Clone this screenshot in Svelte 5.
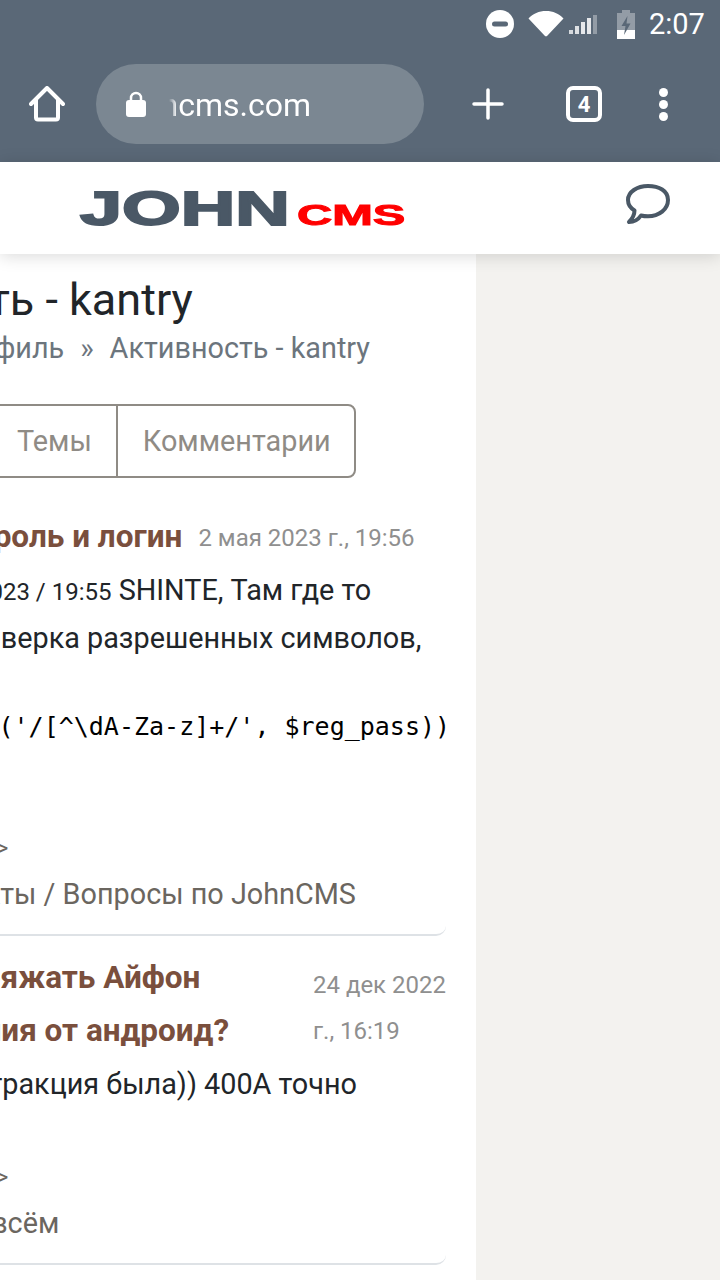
<script>
  const posts = [
    {
      title: ['Менять\u2009 пароль и логин'],
      date: ['2 мая 2023 г., 19:56'],
      body: ['<small>Kantry, 02.05.2023 / 19:55</small> SHINTE, Там где то', 'вот есть проверка разрешенных символов,'],
      code: "preg_match('/[^\\dA-Za-z]+/', $reg_pass))",
      crumb: 'Общий форум >',
      section: 'Наши\u2009 проекты / Вопросы по JohnCMS',
    },
    {
      title: ['Как тут заряжать Айфон', 'тоже отличия от андроид?'],
      wrapped: true,
      date: ['24 дек 2022', 'г., 16:19'],
      body: ['Ага там экстракция была)) 400А точно'],
      crumb: 'Общий форум >',
      section: 'Пишем обо всём',
    },
  ]
</script>

<div class="phone">
  <header class="chrome">
    <div class="status">
      <svg class="dnd" viewBox="0 0 28 28" width="28" height="28">
        <circle cx="14" cy="14" r="14" fill="#fff" />
        <rect x="6" y="11.5" width="16" height="5" rx="2.5" fill="#5a6877" />
      </svg>
      <svg class="wifi" viewBox="0 0 36 27" width="36" height="27">
        <path d="M0.5 8.5C5 3.5 11 1 18 1s13 2.500 17.500 7.500L19.500 25.500a2 2 0 0 1-3 0z" fill="#fff" />
      </svg>
      <svg class="signal" viewBox="0 0 28 20" width="28" height="20">
        <path d="M0 15h4v4H0z" fill="#fff" fill-opacity=".75" />
        <path d="M6 11h4v8H6z" fill="#fff" fill-opacity=".8" />
        <path d="M12 7h4v12h-4z" fill="#fff" fill-opacity=".85" />
        <path d="M18 3h4v16h-4z" fill="#fff" fill-opacity=".85" />
        <path d="M24 0h4v19h-4z" fill="#fff" fill-opacity=".35" />
      </svg>
      <svg class="battery" viewBox="0 0 18 29" width="18" height="29">
        <path d="M5 0h8v3h5v26H0V3h5z" fill="#fff" fill-opacity=".35" />
        <path d="M0 20h18v9H0z" fill="#fff" />
        <path d="M10.500 6 4.500 16h4l-1.500 9 6.500-11.500h-4z" fill="#5a6877" />
      </svg>
      <span class="time">2:07</span>
    </div>
    <div class="toolbar">
      <svg class="home" viewBox="0 0 36 36" width="36" height="36">
        <path d="M2 18 18 2l16 16M7 14v17.500a2 2 0 0 0 2 2h18a2 2 0 0 0 2-2V14" fill="none" stroke="#fff" stroke-width="4" stroke-linecap="round" stroke-linejoin="round" />
      </svg>
      <div class="url">
        <svg class="lock" viewBox="0 0 20 26" width="20" height="26">
          <path d="M5 11V7a5 5 0 0 1 10 0v4" fill="none" stroke="#fff" stroke-width="2.500" />
          <rect y="9" width="20" height="17" rx="3" fill="#fff" />
        </svg>
        <div class="url-clip"><span>johncms.com</span></div>
      </div>
      <svg class="plus" viewBox="0 0 32 32" width="32" height="32">
        <path d="M16 2v28M2 16h28" stroke="#fff" stroke-width="3.500" stroke-linecap="round" />
      </svg>
      <div class="tabs-count">4</div>
      <div class="dots"><i></i><i></i><i></i></div>
    </div>
  </header>

  <div class="site-head">
    <div class="logo"><span class="john">JOHN</span><span class="cms">CMS</span></div>
    <svg class="chat" viewBox="0 0 44 40" width="44" height="40">
      <path d="M22 2C11 2 2 8 2 16c0 4.500 2.500 8 6.500 10.500C8.500 31 6 35 3 38c4.500 0 9-2 12-6.500 2 .5 4.500 .8 7 .8 11 0 20-7 20-16.300S33 2 22 2z" fill="none" stroke="#4a5866" stroke-width="4" stroke-linejoin="round" />
    </svg>
  </div>

  <main class="column">
    <div class="scrolled">
      <h1>Активность - kantry</h1>
      <nav class="crumbs">Сайт <span>»</span> Профиль <span>»</span> Активность - kantry</nav>
      <div class="tabs">
        <span>Посты</span>
        <span>Темы</span>
        <span>Комментарии</span>
      </div>

      <div class="posts">
        {#each posts as post}
          <article class="post">
            <div class="post-head">
              <h2 class:wrapped={post.wrapped}>{#each post.title as line}<div>{line}</div>{/each}</h2>
              <div class="date">{#each post.date as line}<div>{line}</div>{/each}</div>
            </div>
            <div class="text">
              {#each post.body as line}<div>{@html line}</div>{/each}
            </div>
            {#if post.code}
              <pre>{post.code}</pre>
            {/if}
            <div class="crumb">{post.crumb}</div>
            <div class="section">{post.section}</div>
          </article>
        {/each}
      </div>
    </div>
  </main>
</div>

<style>
  :global(body) {
    margin: 0;
    background: #f3f2ef;
  }
  .phone {
    position: relative;
    width: 720px;
    height: 1280px;
    overflow: hidden;
    background: #f3f2ef;
    font-family: Roboto, sans-serif;
  }
  .chrome {
    height: 162px;
    background: #5a6877;
  }
  .status {
    height: 48px;
    display: flex;
    align-items: center;
    color: #fff;
    padding-right: 16px;
    justify-content: flex-end;
  }
  .dnd { margin-right: 14px; }
  .wifi { margin-right: 5px; margin-top: -2px; }
  .signal { margin-right: 20px; margin-top: 2px; }
  .battery { margin-right: 14px; }
  .time { font-size: 29px; width: 55px; }
  .toolbar {
    height: 80px;
    margin-top: 16px;
    display: flex;
    align-items: center;
  }
  .home { margin-left: 29px; }
  .url {
    margin-left: 31px;
    width: 328px;
    height: 80px;
    border-radius: 40px;
    background: #7b8792;
    display: flex;
    align-items: center;
  }
  .lock { margin-left: 30px; }
  .url-clip {
    margin-left: 23px;
    margin-top: 2px;
    width: 142px;
    overflow: hidden;
    display: flex;
    justify-content: flex-end;
    font-size: 32px;
    color: #fff;
    white-space: nowrap;
    mask-image: linear-gradient(to right, transparent 0, #000 8px);
  }
  .plus { margin-left: 48px; }
  .tabs-count {
    margin-left: 62px;
    width: 36px;
    height: 36px;
    box-sizing: border-box;
    border: 4px solid #fff;
    border-radius: 7px;
    color: #fff;
    font-size: 22px;
    font-weight: 700;
    display: flex;
    align-items: center;
    justify-content: center;
  }
  .dots {
    margin-left: 57px;
    display: flex;
    flex-direction: column;
    gap: 3px;
  }
  .dots i {
    width: 9px;
    height: 9px;
    border-radius: 50%;
    background: #fff;
  }
  .site-head {
    position: relative;
    z-index: 1;
    height: 92px;
    background: #fff;
    box-shadow: 0 2px 16px rgba(0, 0, 0, 0.15);
    display: flex;
    align-items: flex-start;
  }
  .logo {
    margin-left: 80px;
    width: 500px;
    height: 92px;
    position: relative;
    font-family: "Liberation Sans", sans-serif;
    font-weight: 700;
    white-space: nowrap;
  }
  .john {
    position: absolute;
    left: 0;
    top: 18px;
    font-size: 49px;
    line-height: 56px;
    color: #4a5866;
    transform: scaleX(1.54);
    transform-origin: left center;
    -webkit-text-stroke: 2px #4a5866;
  }
  .cms {
    position: absolute;
    left: 217px;
    top: 35px;
    font-size: 29px;
    line-height: 36px;
    color: #f00;
    transform: scaleX(1.68);
    transform-origin: left center;
    -webkit-text-stroke: 1px #f00;
  }
  .chat { margin-left: 46px; margin-top: 22px; }
  .column {
    width: 476px;
    height: 1026px;
    background: #fff;
    overflow: hidden;
  }
  .scrolled {
    margin-left: -169px;
    padding-top: 20px;
    width: 615px;
  }
  h1 {
    margin: 0;
    font-size: 45px;
    font-weight: 400;
    line-height: 52px;
    color: #212529;
    white-space: nowrap;
    text-indent: -45px;
  }
  .crumbs {
    margin-top: 1px;
    font-size: 28.8px;
    line-height: 42px;
    color: #6c757d;
    white-space: nowrap;
  }
  .crumbs span { margin: 0 8.8px; }
  .tabs {
    margin-top: 35px;
    display: inline-flex;
    border: 2px solid #8f8b85;
    border-radius: 8px;
    height: 74px;
    box-sizing: border-box;
    color: #8f8b85;
    font-size: 28.8px;
    align-items: stretch;
  }
  .tabs span {
    padding: 0 24px 0 25px;
    display: flex;
    align-items: center;
  }
  .tabs span:first-child {
    box-sizing: border-box;
    width: 157px;
  }
  .tabs span:last-child { padding-right: 23px; }
  .tabs span + span { border-left: 2px solid #8f8b85; }
  .posts { margin-top: 17px; }
  .post {
    border-bottom: 2px solid #dee2e6;
    border-radius: 0 0 10px 10px;
    padding-bottom: 19px;
    color: #212529;
  }
  .post-head {
    display: flex;
    gap: 16px;
    padding-top: 15px;
  }
  h2 {
    margin: 0;
    font-size: 31.5px;
    font-weight: 700;
    line-height: 53px;
    color: #7a4f3d;
    white-space: nowrap;
  }
  h2.wrapped { flex: 1; }
  .date {
    font-size: 24px;
    line-height: 46px;
    color: #8f8f8f;
    white-space: nowrap;
    padding-top: 5px;
  }
  .wrapped + .date { padding-top: 11px; }
  .text {
    margin-top: 3px;
    font-size: 28.8px;
    line-height: 48px;
    white-space: nowrap;
  }
  .text :global(small) {
    font-size: 24px;
    line-height: 1;
  }
  pre {
    margin: 47px 0 0;
    padding-left: 17px;
    font-family: "DejaVu Sans Mono", monospace;
    font-size: 25px;
    line-height: 36px;
    color: #000;
    height: 70px;
    overflow: hidden;
  }
  .crumb {
    padding-left: 2px;
    font-size: 24px;
    line-height: 36px;
    color: #6b665f;
    margin-top: 51px;
  }
  .section {
    margin-top: 7px;
    font-size: 28.8px;
    line-height: 42px;
    color: #6b665f;
    white-space: nowrap;
  }
</style>
